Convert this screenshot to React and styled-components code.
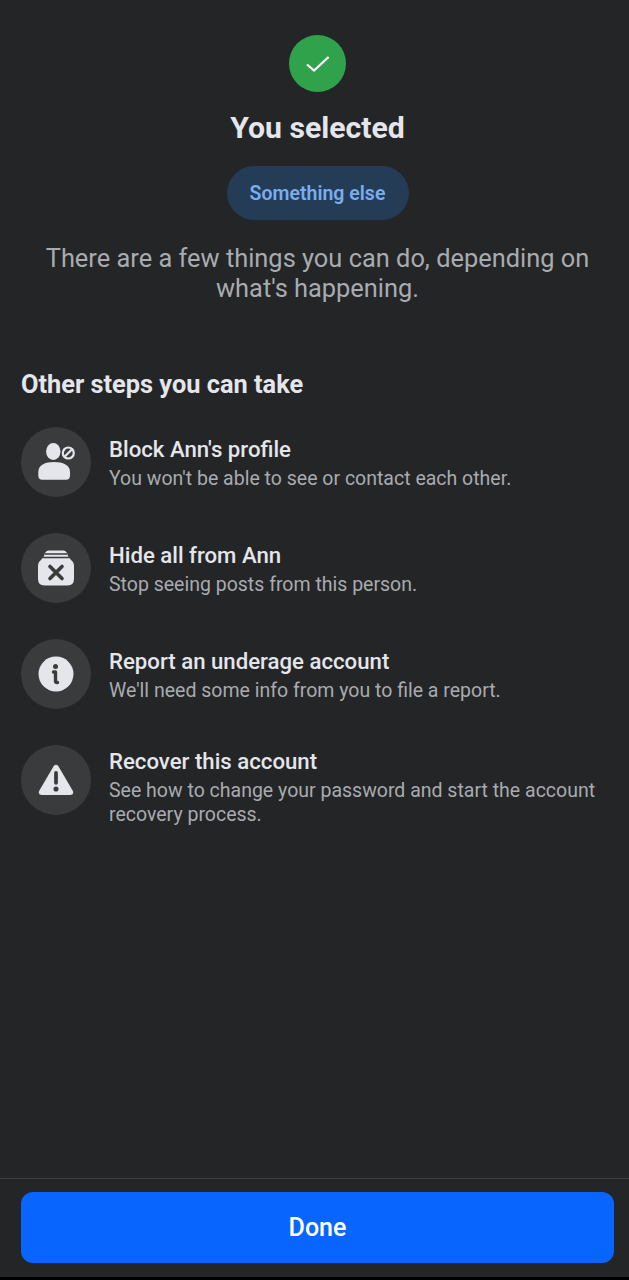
import React from "react";
import styled, { createGlobalStyle } from "styled-components";

const Global = createGlobalStyle`
  html, body { margin: 0; padding: 0; background: #000; }
  body { font-family: Roboto, "Liberation Sans", sans-serif; }
`;

const Screen = styled.div`
  width: 629px;
  height: 1277px;
  background: #242526;
  display: flex;
  flex-direction: column;
  overflow: hidden;
`;

const Main = styled.main`
  flex: 1;
  display: flex;
  flex-direction: column;
  padding: 35px 15px 0 21px;
`;

const Hero = styled.section`
  display: flex;
  flex-direction: column;
  align-items: center;
`;

const CheckBadge = styled.div`
  width: 57px;
  height: 57px;
  border-radius: 50%;
  background: #31a24c;
  display: flex;
  align-items: center;
  justify-content: center;
`;

const Title = styled.h1`
  margin: 18px 0 0;
  font-size: 30.2px;
  line-height: 36px;
  font-weight: 700;
  color: #e4e6eb;
`;

const Chip = styled.div`
  margin-top: 20px;
  width: 182px;
  height: 54px;
  border-radius: 27px;
  background: #243c56;
  color: #78aef0;
  font-size: 19.5px;
  font-weight: 600;
  display: flex;
  align-items: center;
  justify-content: center;
`;

const Lead = styled.p`
  margin: 23px 0 0;
  width: 570px;
  text-align: center;
  font-size: 25.4px;
  line-height: 30px;
  font-weight: 400;
  color: #a8abaf;
`;

const SectionTitle = styled.h2`
  margin: 66px 0 0;
  font-size: 25.35px;
  line-height: 30px;
  font-weight: 700;
  color: #e4e6eb;
`;

const Steps = styled.ul`
  list-style: none;
  margin: 28px 0 0;
  padding: 0;
  display: flex;
  flex-direction: column;
  gap: 36px;
`;

const Step = styled.li`
  display: flex;
  gap: 18px;
  height: 70px;
`;

const IconCircle = styled.div`
  flex: none;
  width: 70px;
  height: 70px;
  border-radius: 50%;
  background: #3a3b3c;
  display: flex;
  align-items: center;
  justify-content: center;
`;

const StepText = styled.div`
  padding-top: ${(p) => p.$top}px;
  min-width: 0;
`;

const StepTitle = styled.div`
  font-size: 22.2px;
  line-height: 30px;
  font-weight: 500;
  color: #e4e6eb;
`;

const StepSub = styled.div`
  margin-top: 3px;
  font-size: 19.5px;
  line-height: 24px;
  color: #a8abaf;
`;

const Footer = styled.footer`
  flex: none;
  border-top: 1px solid #3e4042;
  padding: 13px 15px 14px 21px;
`;

const DoneButton = styled.button`
  display: block;
  width: 100%;
  height: 71px;
  border: 0;
  border-radius: 12px;
  background: #0866ff;
  color: #fff;
  font-family: inherit;
  font-size: 25px;
  font-weight: 500;
`;

const Ic = styled.svg`
  display: block;
`;

const Check = () => (
  <Ic width="26" height="20" viewBox="0 0 26 20" fill="none">
    <path d="M2 10.5 L9 16.6 L23.6 3" stroke="#fff" strokeWidth="2.2" />
  </Ic>
);

const BlockIcon = () => (
  <Ic width="40" height="40" viewBox="0 0 40 40">
    <ellipse cx="17.3" cy="9.5" rx="7.2" ry="8.5" fill="#e4e6eb" />
    <path d="M2.3 30 C2.3 23 9 20 18 20 C27 20 34 23 34 30 L34 33.5 Q34 37.7 30 37.7 L6.3 37.7 Q2.3 37.7 2.3 33.5 Z" fill="#e4e6eb" />
    <circle cx="32.3" cy="11" r="5.5" fill="none" stroke="#e4e6eb" strokeWidth="2.2" />
    <path d="M28.5 14.8 L36.1 7.2" stroke="#e4e6eb" strokeWidth="2.2" />
  </Ic>
);

const HideIcon = () => (
  <Ic width="36" height="36" viewBox="0 0 36 36">
    <path d="M6 6 Q7 .5 11 .5 L25 .5 Q29 .5 30 6 L33 10 Q36 12 36 16 L36 29 Q36 35.5 29.5 35.5 L6.5 35.5 Q0 35.5 0 29 L0 16 Q0 12 3 10 Z" fill="#e4e6eb" />
    <path d="M6.5 4 L29.5 4 M4.5 7.5 L31.5 7.5" stroke="#3a3b3c" strokeWidth="1.5" />
    <path d="M12 16.5 L24 28.5 M24 16.5 L12 28.5" stroke="#3a3b3c" strokeWidth="3.6" strokeLinecap="round" />
  </Ic>
);

const InfoIcon = () => (
  <Ic width="36" height="36" viewBox="0 0 36 36">
    <circle cx="18" cy="18" r="17.5" fill="#e4e6eb" />
    <circle cx="17.5" cy="10.5" r="2.5" fill="#3a3b3c" />
    <path d="M15.5 16 L17.5 16 L17.5 25 Q17.5 26.5 19.5 26.5" fill="none" stroke="#3a3b3c" strokeWidth="3.4" strokeLinecap="round" strokeLinejoin="round" />
  </Ic>
);

const WarnIcon = () => (
  <Ic width="36" height="32" viewBox="0 0 38 34">
    <path d="M16.6 2 Q19 -0.6 21.4 2 L36.8 28.5 Q38.5 32.5 34.5 33 L3.5 33 Q-0.5 32.5 1.2 28.5 Z" fill="#e4e6eb" />
    <path d="M19 9.5 L19 20" stroke="#3a3b3c" strokeWidth="4" strokeLinecap="round" />
    <circle cx="19" cy="26.5" r="2.7" fill="#3a3b3c" />
  </Ic>
);

const steps = [
  { icon: <BlockIcon />, title: "Block Ann's profile", sub: "You won't be able to see or contact each other.", top: 7 },
  { icon: <HideIcon />, title: "Hide all from Ann", sub: "Stop seeing posts from this person.", top: 7 },
  { icon: <InfoIcon />, title: "Report an underage account", sub: "We'll need some info from you to file a report.", top: 7 },
  { icon: <WarnIcon />, title: "Recover this account", sub: "See how to change your password and start the account recovery process.", top: 1 },
];

export default function App() {
  return (
    <Screen>
      <Global />
      <Main>
        <Hero>
          <CheckBadge><Check /></CheckBadge>
          <Title>You selected</Title>
          <Chip>Something else</Chip>
          <Lead>There are a few things you can do, depending on what's happening.</Lead>
        </Hero>
        <SectionTitle>Other steps you can take</SectionTitle>
        <Steps>
          {steps.map((s) => (
            <Step key={s.title}>
              <IconCircle>{s.icon}</IconCircle>
              <StepText $top={s.top}>
                <StepTitle>{s.title}</StepTitle>
                <StepSub>{s.sub}</StepSub>
              </StepText>
            </Step>
          ))}
        </Steps>
      </Main>
      <Footer><DoneButton>Done</DoneButton></Footer>
    </Screen>
  );
}
